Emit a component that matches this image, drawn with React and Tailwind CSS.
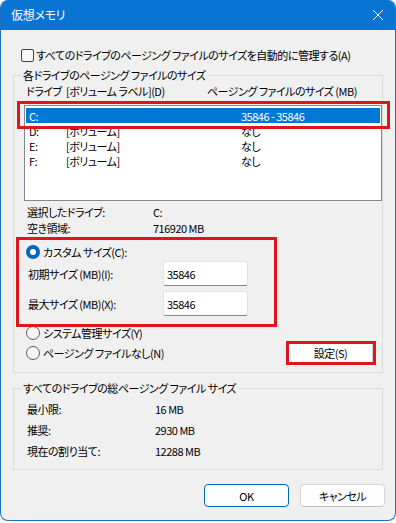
import React from "react";

const font = "font-['Noto_Sans_CJK_JP','Noto_Sans',sans-serif]";

const drives = [
  { d: "C:", label: "", size: "35846 - 35846", sel: true },
  { d: "D:", label: "[ボリューム]", size: "なし" },
  { d: "E:", label: "[ボリューム]", size: "なし" },
  { d: "F:", label: "[ボリューム]", size: "なし" },
];

function Radio({ checked }) {
  if (checked) {
    return (
      <span className="w-[14px] h-[14px] rounded-full bg-[#0067c0] flex items-center justify-center shrink-0">
        <span className="w-[6px] h-[6px] rounded-full bg-white" />
      </span>
    );
  }
  return <span className="w-[14px] h-[14px] rounded-full border border-[#5a5a5a] bg-[#f7f7f7] shrink-0" />;
}

function TextBox({ value }) {
  return (
    <div className="w-[85px] h-[25px] bg-white border border-[#e3e3e3] border-b-[#868686] rounded-[3px] flex items-center pl-[3px]">
      {value}
    </div>
  );
}

export default function App() {
  return (
    <div className={`w-[396px] h-[523px] bg-white text-[11px] leading-[16px] tracking-[-0.5px] whitespace-nowrap text-black ${font} [font-feature-settings:'palt']`}>
      <div className="w-[396px] h-[521px] flex flex-col bg-[#f0f0f0] border-x border-b border-[#1a73c9] rounded-t-[8px] rounded-b-[8px] overflow-hidden">
        {/* title bar */}
        <div className="h-[30px] bg-[#0a74d2] flex items-center justify-between pl-[10px] pr-[10px] text-white text-[12px] tracking-[-0.3px] shrink-0">
          <span>仮想メモリ</span>
          <svg width="12" height="12" viewBox="0 0 12 12" className="mr-[1px]">
            <path d="M1 1 L11 11 M11 1 L1 11" stroke="white" strokeWidth="1" />
          </svg>
        </div>

        <div className="flex-1 pl-[12px] pr-[12px]">
          {/* auto manage */}
          <div className="mt-[17px] ml-[8px] h-[16px] flex items-center gap-[2px]">
            <span className="w-[13px] h-[13px] border border-[#444] rounded-[2px] bg-[#f7f7f7] shrink-0" />
            <span>すべてのドライブのページング ファイルのサイズを自動的に管理する(A)</span>
          </div>

          {/* group 1 */}
          <fieldset className="mt-[4px] w-[370px] border border-[#dcdcdc]">
            <legend className="ml-[7px] px-[2px]">各ドライブのページング ファイルのサイズ</legend>
            <div className="h-[16px] flex items-center pl-[12px]">
              <span className="w-[40px]">ドライブ</span>
              <span className="w-[141px]">[ボリューム ラベル](D)</span>
              <span>ページング ファイルのサイズ (MB)</span>
            </div>

            <div className="relative mt-[6px] ml-[10px] w-[358px] h-[96px] bg-white border border-[#828790] pt-[2px] px-[1px]">
              {drives.map((r) => (
                <div
                  key={r.d}
                  className={`h-[15px] flex items-center pl-[3px] ${r.sel ? "bg-[#0078d7] text-white" : ""}`}
                >
                  <span className="w-[37px]">{r.d}</span>
                  <span className="w-[175px]">{r.label}</span>
                  <span>{r.size}</span>
                </div>
              ))}
              <div className="absolute left-[-8px] top-[-5px] w-[373px] h-[28px] border-[3px] border-[#e0141c]" />
            </div>

            <div className="mt-[3px] pl-[13px]">
              <div className="h-[16px] flex items-center">
                <span className="w-[126px]">選択したドライブ:</span>
                <span>C:</span>
              </div>
              <div className="h-[16px] flex items-center">
                <span className="w-[126px]">空き領域:</span>
                <span>716920 MB</span>
              </div>
            </div>

            <div className="relative pt-[8px]">
              <div className="ml-[12px] h-[16px] flex items-center gap-[3px]">
                <Radio checked />
                <span>カスタム サイズ(C):</span>
              </div>
              <div className="mt-[1px] ml-[14px] h-[25px] flex items-center">
                <span className="w-[135px]">初期サイズ (MB)(I):</span>
                <TextBox value="35846" />
              </div>
              <div className="mt-[5px] ml-[14px] h-[25px] flex items-center">
                <span className="w-[135px]">最大サイズ (MB)(X):</span>
                <TextBox value="35846" />
              </div>
              <div className="mt-[9px] ml-[12px] h-[16px] flex items-center gap-[3px]">
                <Radio />
                <span>システム管理サイズ(Y)</span>
              </div>
              <div className="absolute left-[2px] top-[1px] w-[261px] h-[90px] border-[3px] border-[#e0141c]" />
            </div>

            <div className="mt-[1px] h-[22px] flex items-center justify-between pl-[12px] pr-[9px]">
              <div className="flex items-center gap-[3px]">
                <Radio />
                <span>ページング ファイルなし(N)</span>
              </div>
              <div className="relative w-[85px] h-[22px] bg-white border border-[#d0d0d0] rounded-[4px] flex items-center justify-center">
                設定(S)
                <div className="absolute -left-[3px] -top-[2px] w-[90px] h-[24px] border-[3px] border-[#e0141c]" />
              </div>
            </div>
            <div className="h-[8px]" />
          </fieldset>

          {/* group 2 */}
          <fieldset className="mt-[7px] w-[370px] border border-[#dcdcdc]">
            <legend className="ml-[7px] px-[2px]">すべてのドライブの総ページング ファイル サイズ</legend>
            <div className="mt-[2px] pl-[13px]">
              <div className="h-[21px] flex items-center">
                <span className="w-[128px]">最小限:</span>
                <span>16 MB</span>
              </div>
              <div className="h-[21px] flex items-center">
                <span className="w-[128px]">推奨:</span>
                <span>2930 MB</span>
              </div>
              <div className="h-[21px] flex items-center">
                <span className="w-[128px]">現在の割り当て:</span>
                <span>12288 MB</span>
              </div>
            </div>
            <div className="h-[8px]" />
          </fieldset>

          {/* buttons */}
          <div className="mt-[14px] -mr-[2px] flex justify-end gap-[11px]">
            <button className="w-[85px] h-[23px] bg-[#fdfdfd] border border-[#0067c0] rounded-[4px] flex items-center justify-center">
              OK
            </button>
            <button className="w-[85px] h-[23px] bg-[#fdfdfd] border border-[#d6d6d6] border-b-[#c2c2c2] rounded-[4px] flex items-center justify-center">
              キャンセル
            </button>
          </div>
        </div>
      </div>
    </div>
  );
}
